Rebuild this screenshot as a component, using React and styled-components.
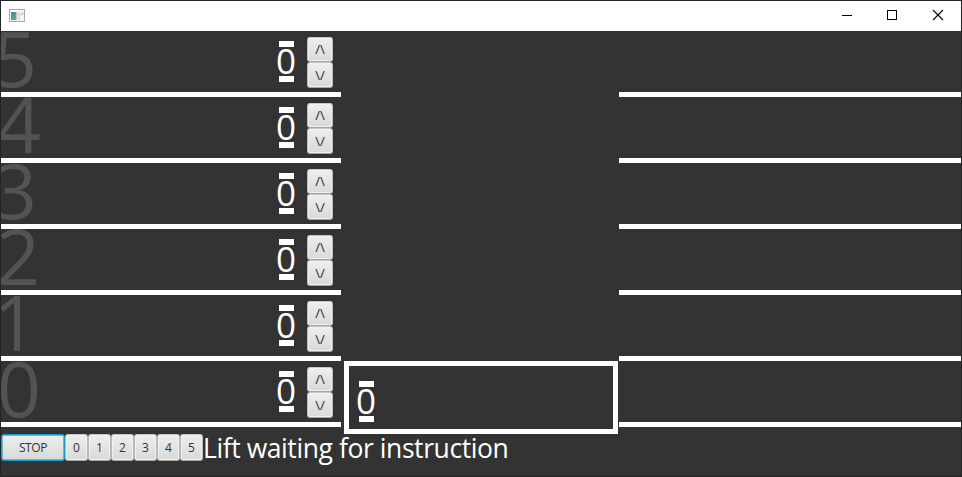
import React from "react";
import styled, { createGlobalStyle } from "styled-components";

const Global = createGlobalStyle`
  * { box-sizing: border-box; }
  body { margin: 0; background: #333; overflow: hidden; }
`;

const Window = styled.div`
  width: 962px;
  height: 477px;
  border: 1px solid #252326;
  background: #333;
  display: flex;
  flex-direction: column;
  overflow: hidden;
  font-family: "Open Sans", "Noto Sans", sans-serif;
`;

const TitleBar = styled.header`
  height: 30px;
  flex: none;
  background: #fff;
  display: flex;
  align-items: center;
  justify-content: space-between;
  padding-left: 8px;
`;

const AppIcon = styled.svg`
  display: block;
  margin-bottom: 1px;
`;

const WindowControls = styled.div`
  display: flex;
`;

const ControlIcon = styled.svg`
  display: block;
  width: 46px;
  height: 30px;
`;

const Building = styled.main`
  height: 396px;
  flex: none;
  display: grid;
  grid-template-columns: 340px 278px 342px;
`;

const Floors = styled.div`
  display: grid;
  grid-template-rows: repeat(6, 66px);
`;

const Floor = styled.div`
  height: 66px;
  border-bottom: 5px solid #fff;
  display: flex;
  justify-content: space-between;
  overflow: hidden;
`;

const FloorNumber = styled.span`
  color: #535353;
  font-size: 77px;
  line-height: 54px;
  height: 61px;
  margin-left: ${(p) => p.$bearing}px;
`;

const FloorTools = styled.div`
  display: flex;
  gap: 12px;
  padding: 6px 8px 0 0;
`;

const Counter = styled.div`
  width: 19px;
  height: 41px;
  margin-top: 4px;
  padding-left: 1px;
  display: flex;
  flex-direction: column;
  align-items: center;
  justify-content: space-between;
`;

const CounterBar = styled.i`
  width: 15px;
  height: 6px;
  flex: none;
  background: #fff;
`;

const CounterValue = styled.span`
  color: #fff;
  font-size: 35px;
  line-height: 28px;
  height: 29px;
`;

const CallButtons = styled.div`
  display: flex;
  flex-direction: column;
`;

const Button = styled.button`
  width: ${(p) => p.$width}px;
  height: 26px;
  padding: 0;
  border: 1px solid;
  border-color: ${(p) => (p.$focused ? "#189bc9" : "#c5c5c5 #b8b8b8 #a5a5a5")};
  border-radius: 3px;
  background: linear-gradient(#eee, #d9d9d9);
  box-shadow: inset 0 0 0 1px ${(p) => (p.$focused ? "#5eb9d9" : "#f1f1f1")};
  color: #333;
  font: 12px/22px "Open Sans", "Noto Sans", sans-serif;
  text-align: center;
`;

const CallButton = styled(Button)`
  height: ${(p) => (p.$up ? 25 : 26)}px;
  padding-bottom: 1px;
  font-family: "Noto Sans", sans-serif;
  font-size: 13px;
`;

const PanelButton = styled(Button)`
  height: 27px;
  padding-top: 1px;
  letter-spacing: ${(p) => (p.$focused ? -0.4 : 0)}px;
`;

const Shaft = styled.div`
  display: flex;
  flex-direction: column;
  justify-content: flex-end;
  padding: 0 1px 0 3px;
`;

const Lift = styled.div`
  height: 73px;
  flex: none;
  margin-bottom: -7px;
  border: 5px solid #fff;
  padding: 11px 0 0 7px;
`;

const Footer = styled.footer`
  display: flex;
  margin-top: 7px;
  height: 42px;
`;

const Status = styled.span`
  color: #fff;
  font-size: 26.5px;
  line-height: 28px;
  letter-spacing: -0.42px;
  white-space: nowrap;
`;

function People({ value }) {
  return (
    <Counter>
      <CounterBar />
      <CounterValue>{value}</CounterValue>
      <CounterBar />
    </Counter>
  );
}

const floors = [
  { n: 5, bearing: -8 },
  { n: 4, bearing: -4 },
  { n: 3, bearing: -8 },
  { n: 2, bearing: -5 },
  { n: 1, bearing: -8 },
  { n: 0, bearing: -4 },
];

export default function App() {
  return (
    <Window>
      <Global />
      <TitleBar>
        <AppIcon width="16" height="13" viewBox="0 0 16 13">
          <defs>
            <linearGradient id="pane" x1="0" y1="0" x2="1" y2="1">
              <stop offset="0" stopColor="#4b829e" />
              <stop offset="1" stopColor="#63b49a" />
            </linearGradient>
          </defs>
          <rect x="0.5" y="0.5" width="15" height="12" fill="#f5f5f5" stroke="#a9a9a9" />
          <rect x="2" y="3" width="5.5" height="8" fill="url(#pane)" />
          <rect x="8.5" y="3" width="2.5" height="8" fill="#dedede" />
          <path d="M11.5 5l1 1 1.5-2.5" fill="none" stroke="#92aaa2" />
        </AppIcon>
        <WindowControls>
          <ControlIcon viewBox="0 0 46 30">
            <path d="M19 14.5h10" stroke="#000" />
          </ControlIcon>
          <ControlIcon viewBox="0 0 46 30">
            <rect x="18.5" y="9.5" width="9" height="9" fill="none" stroke="#000" />
          </ControlIcon>
          <ControlIcon viewBox="0 0 46 30">
            <path d="M18 9l10 10M28 9l-10 10" stroke="#000" strokeWidth="1.1" />
          </ControlIcon>
        </WindowControls>
      </TitleBar>
      <Building>
        <Floors>
          {floors.map(({ n, bearing }) => (
            <Floor key={n}>
              <FloorNumber $bearing={bearing}>{n}</FloorNumber>
              <FloorTools>
                <People value={0} />
                <CallButtons>
                  <CallButton $width={26} $up>{"/\\"}</CallButton>
                  <CallButton $width={26}>{"\\/"}</CallButton>
                </CallButtons>
              </FloorTools>
            </Floor>
          ))}
        </Floors>
        <Shaft>
          <Lift>
            <People value={0} />
          </Lift>
        </Shaft>
        <Floors>
          {floors.map(({ n }) => (
            <Floor key={n} />
          ))}
        </Floors>
      </Building>
      <Footer>
        <PanelButton $width={64} $focused>STOP</PanelButton>
        {[0, 1, 2, 3, 4, 5].map((n) => (
          <PanelButton key={n} $width={23}>{n}</PanelButton>
        ))}
        <Status>Lift waiting for instruction</Status>
      </Footer>
    </Window>
  );
}
